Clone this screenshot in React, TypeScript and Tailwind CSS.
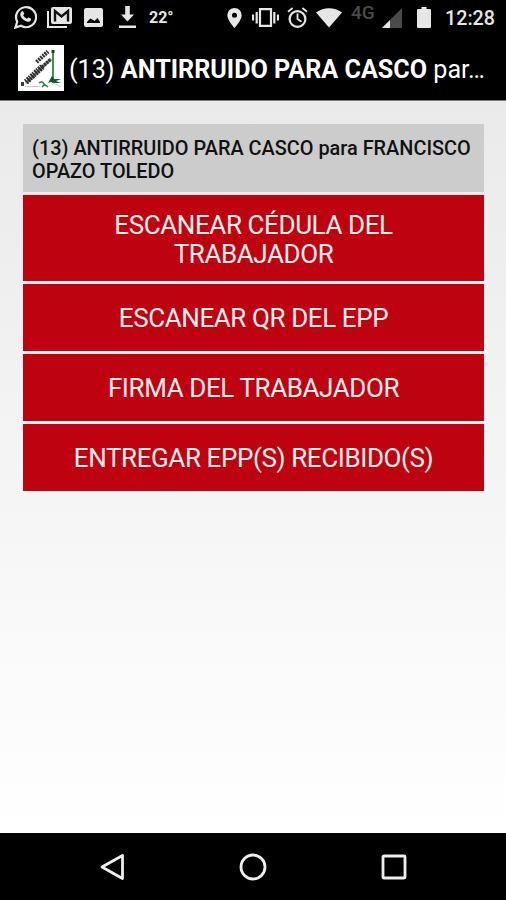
import type { ReactNode } from 'react';

interface IconProps {
  className: string;
  viewBox: string;
  children: ReactNode;
}

const actions = [
  { id: 'cedula', label: 'ESCANEAR CÉDULA DEL TRABAJADOR', height: 'h-[86px] px-[60px] pt-1' },
  { id: 'qr', label: 'ESCANEAR QR DEL EPP', height: 'h-[67px] pt-[3px]' },
  { id: 'firma', label: 'FIRMA DEL TRABAJADOR', height: 'h-[67px] pt-[3px]' },
  { id: 'entregar', label: 'ENTREGAR EPP(S) RECIBIDO(S)', height: 'h-[67px] pt-[3px]' }
];

function Icon({ className, viewBox, children }: IconProps) {
  return (
    <svg className={`shrink-0 ${className}`} viewBox={viewBox} fill="currentColor" aria-hidden="true">
      {children}
    </svg>
  );
}

function StatusBar() {
  return (
    <div className="flex h-9 shrink-0 items-start pl-[14px] text-[#e6e6e6]">
      {/* WhatsApp */}
      <Icon className="mt-[5px] h-6 w-[23px]" viewBox="0 0 23 24">
        <path d="M1.4 22.6 3.2 16.8A10 10 0 1 1 7 20.8Z" fill="none" stroke="currentColor" strokeWidth="2.2" />
        <path d="M7.6 6.4c.6-.5 1.4-.4 1.7.3l.8 1.8c.2.6-.8 1.4-.9 1.8.8 1.6 2 2.7 3.7 3.5.5-.2 1.1-1.4 1.7-1.2l2.1 1c.7.4.3 1.7-.3 2.3-1.4 1.3-3.2 1.1-5 .2-2.2-1-4-2.9-4.8-5-.6-1.7-.4-3.6 1-4.7Z" />
      </Icon>
      {/* Gmail */}
      <Icon className="mt-[7px] ml-[10px] h-[21px] w-[25px]" viewBox="0 0 25 21">
        <path d="M1 4v16h19" fill="none" stroke="currentColor" strokeWidth="2" />
        <path d="M6 0h17a2 2 0 0 1 2 2v13a2 2 0 0 1-2 2H6a2 2 0 0 1-2-2V2a2 2 0 0 1 2-2Z" />
        <path d="M8 14.500V4l6.500 5.500L21 4v10.500" fill="none" stroke="#111" strokeWidth="2.4" />
      </Icon>
      {/* Screenshot */}
      <Icon className="mt-[8px] ml-[12px] h-[19px] w-[19px]" viewBox="0 0 19 19">
        <path fillRule="evenodd" d="M2 0h15a2 2 0 0 1 2 2v15a2 2 0 0 1-2 2H2a2 2 0 0 1-2-2V2a2 2 0 0 1 2-2Zm1 15h13v-1l-2.500-4-3 3-1.700-1.200L6.300 10.500 3 14Z" />
      </Icon>
      {/* Download */}
      <Icon className="mt-[6px] ml-4 h-[22px] w-[17px]" viewBox="0 0 17 22">
        <path d="M6.200 0h4.600v8.500h4.200l-6.500 7-6.500-7h4.200ZM0 19.500h17V22H0Z" />
      </Icon>
      <span className="mt-[6px] ml-[13px] w-[27px] text-[16px] leading-6 font-bold">22°</span>
      {/* Location */}
      <Icon className="mt-[8px] ml-[51px] h-5 w-[15px]" viewBox="0 0 15 20">
        <path fillRule="evenodd" d="M7.500 0A7.200 7.200 0 0 1 14.700 7.200C14.700 12 7.500 20 7.500 20S.3 12 .3 7.200A7.200 7.200 0 0 1 7.500 0Zm0 4.800a2.500 2.500 0 1 0 0 5 2.500 2.500 0 0 0 0-5Z" />
      </Icon>
      {/* Vibrate */}
      <Icon className="mt-[8px] ml-[10px] h-[19px] w-[27px]" viewBox="0 0 27 19">
        <path d="M8 1.200h11v16.600H8ZM4.700 4v11.500M1 6.500v6M22.300 4v11.500M26 6.500v6" fill="none" stroke="currentColor" strokeWidth="2.2" />
      </Icon>
      {/* Alarm */}
      <Icon className="mt-[7px] ml-[8px] h-[21px] w-[21px]" viewBox="0 0 21 21">
        <path d="M1 4.700 5.600 1M20 4.700 15.400 1M10.500 6.500v5.500l4 2.700" fill="none" stroke="currentColor" strokeWidth="1.8" />
        <circle cx="10.5" cy="12" r="7.900" fill="none" stroke="currentColor" strokeWidth="2.2" />
      </Icon>
      {/* Wi-Fi */}
      <Icon className="mt-[8px] ml-[8px] h-5 w-[26px]" viewBox="0 0 26 20">
        <path d="M0 4.500C7.500-1.200 18.500-1.200 26 4.500L13 19.500Z" />
      </Icon>
      <span className="mt-px ml-[9px] w-[25px] text-[19px] leading-6 font-medium text-[#4a4a4a]">4G</span>
      {/* Signal */}
      <Icon className="mt-[8px] ml-[6px] h-5 w-5" viewBox="0 0 20 20">
        <path d="M20 0v20H0Z" fill="#4a4a4a" />
        <path d="M8 12v8H0Z" />
      </Icon>
      {/* Battery */}
      <Icon className="mt-[7px] ml-[15px] h-[21px] w-[14px]" viewBox="0 0 14 21">
        <path d="M4.500 0h5v2H13a1 1 0 0 1 1 1v17a1 1 0 0 1-1 1H1a1 1 0 0 1-1-1V3a1 1 0 0 1 1-1h3.500Z" />
      </Icon>
      <span className="mt-[7px] ml-[14px] text-[19.7px] leading-6 font-medium">12:28</span>
    </div>
  );
}

function AppLogo() {
  return (
    <svg className="h-[46px] w-[46px] shrink-0 bg-white" viewBox="0 0 46 46" fill="none" aria-hidden="true">
      <path d="M8 38 33 14" stroke="#777" strokeWidth="3" />
      <path d="M8 37 25 21" stroke="#2b2b2b" strokeWidth="6" strokeDasharray="1.5 1 2 .7" />
      <path d="m24 22 9-8" stroke="#333" strokeWidth="3.5" strokeDasharray="2 1" />
      <path d="M18.500 17 30 6.500" stroke="#333" strokeWidth="4" strokeDasharray="2 .8" />
      <path d="M35 6v32" stroke="#3c9155" strokeWidth="2" />
      <path d="M33.500 5h3v3h-3Z" fill="#1f3d28" />
      <path d="m30 38 4-7 2 3h7l-5 2 5 2h-7l-3-1Z" fill="#0f5a2a" />
      <path d="M3 37h3v4H3Z" fill="#14532d" />
      <path d="M7 41.500h15M35 38l8 4" stroke="#ccc" strokeWidth="1" />
      <path d="M21 38c2-2 4-1 5 1l4 3M24 42l3-3" stroke="#2f7a4a" strokeWidth="1.5" />
    </svg>
  );
}

function TitleBar() {
  return (
    <header className="flex h-[65px] shrink-0 items-center border-b border-[#777] pr-5 pl-[18px] text-white">
      <AppLogo />
      <h1 className="mt-[3px] ml-[5px] text-[25.15px] leading-8 whitespace-nowrap">
        (13) <b>ANTIRRUIDO PARA CASCO</b> par…
      </h1>
    </header>
  );
}

function NavigationBar() {
  return (
    <nav className="flex h-[67px] shrink-0 items-center justify-center gap-[114px] text-[#eee]">
      <svg className="h-7 w-[26px]" viewBox="0 0 26 28" fill="none" stroke="currentColor" strokeWidth="2.8">
        <path d="M23.500 2.500v23L3 14Z" strokeLinejoin="round" />
      </svg>
      <svg className="h-7 w-7" viewBox="0 0 28 28" fill="none" stroke="currentColor" strokeWidth="2.8">
        <circle cx="14" cy="14" r="12" />
      </svg>
      <svg className="h-[26px] w-[26px]" viewBox="0 0 26 26" fill="none" stroke="currentColor" strokeWidth="2.8">
        <rect x="2" y="2" width="22" height="22" rx="1" />
      </svg>
    </nav>
  );
}

export default function App() {
  return (
    <div className="flex h-[900px] w-[506px] flex-col overflow-hidden bg-black font-[Roboto,sans-serif]">
      <StatusBar />
      <TitleBar />
      <main className="flex-1 bg-linear-to-b from-[#eaeaea] to-white pt-[23px] pr-[22px] pl-[23px]">
        <div className="flex flex-col gap-[3px]">
          <div className="h-[68px] bg-[#cccccc] pt-[13px] pl-[9px] text-[19.9px] leading-[23px] font-medium text-[#111]">
            (13) ANTIRRUIDO PARA CASCO para FRANCISCO OPAZO TOLEDO
          </div>
          {actions.map((action) => (
            <button
              key={action.id}
              className={`flex items-center justify-center bg-[#bf020f] text-[26px] leading-[29.5px] tracking-[-0.4px] text-[#fff0f0] ${action.height}`}
            >
              {action.label}
            </button>
          ))}
        </div>
      </main>
      <NavigationBar />
    </div>
  );
}
